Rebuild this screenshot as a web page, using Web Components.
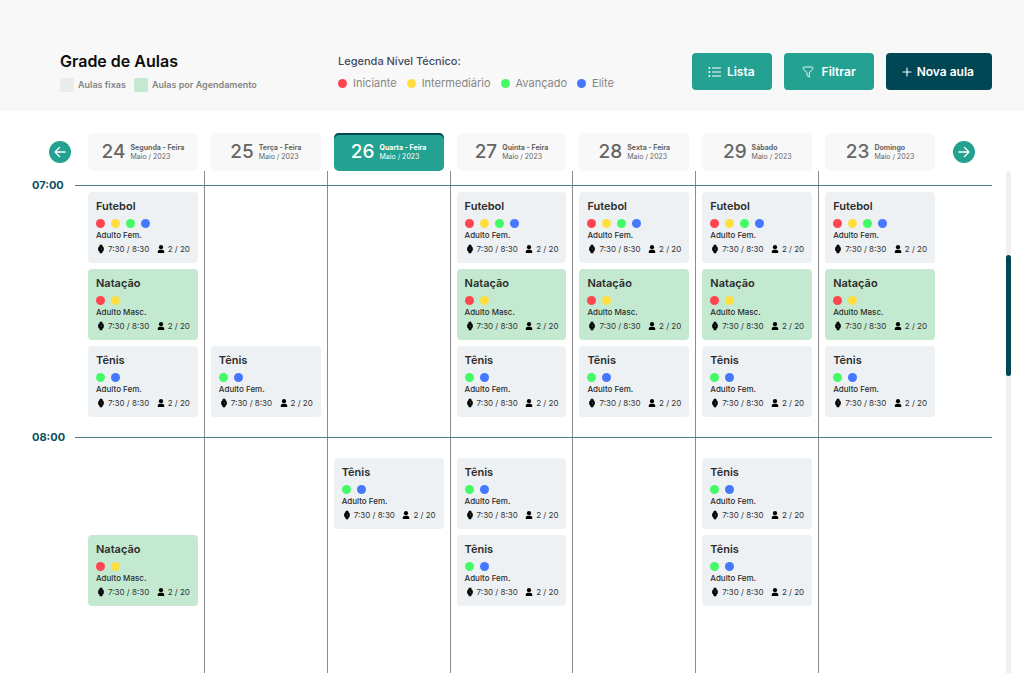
<!DOCTYPE html>
<html lang="pt-BR">
<head>
<meta charset="utf-8">
<meta name="viewport" content="width=device-width, initial-scale=1">
<title>Grade de Aulas</title>
<style>
  :root {
    --teal: #23a191;
    --navy: #004755;
    --surface: #f8f8f8;
    --fixed: #edf1f3;
    --booked: #c3e9d0;
    --red: #ff4550;
    --yellow: #ffdf3f;
    --green: #43fb67;
    --blue: #4577ff;
  }
  body {
    margin: 0;
    background: #fff;
    font-family: Inter, "Liberation Sans", sans-serif;
  }
</style>
</head>
<body>
<schedule-app></schedule-app>

<script>
const define = (name, cls) => customElements.define(name, cls);
const attach = (el, html) => { el.attachShadow({ mode: "open" }).innerHTML = html; };

const ICONS = {
  list: '<svg viewBox="0 0 14 12" width="14" height="12"><g fill="none" stroke="currentColor" stroke-width="1"><path d="M4 2h9M4 6h9M4 10h9"/></g><g fill="currentColor"><circle cx="1.4" cy="2" r="1"/><circle cx="1.4" cy="6" r="1"/><circle cx="1.4" cy="10" r="1"/></g></svg>',
  filter: '<svg viewBox="0 0 12 12" width="12" height="12"><path d="M2 1h8q.8 0 .8.800v.8q0 .5-.5 1L7.300 6.500v4.600L5 9.600V6.500L1.700 3.600q-.5-.5-.5-1v-.8Q1.200 1 2 1z" fill="none" stroke="currentColor" stroke-width=".9" stroke-linejoin="round"/></svg>',
  plus: '<svg viewBox="0 0 10 10" width="10" height="10"><path d="M5 1v8M1 5h8" stroke="currentColor" stroke-width="1.1" stroke-linecap="round"/></svg>',
  left: '<svg viewBox="0 0 12 12" width="12" height="12"><path d="M11 6H1.2M5.5 1.5L1 6l4.500 4.500" fill="none" stroke="currentColor" stroke-width="1.3" stroke-linecap="round" stroke-linejoin="round"/></svg>',
  right: '<svg viewBox="0 0 12 12" width="12" height="12"><path d="M1 6h9.800M6.500 1.500L11 6l-4.500 4.500" fill="none" stroke="currentColor" stroke-width="1.3" stroke-linecap="round" stroke-linejoin="round"/></svg>',
  watch: '<svg viewBox="0 0 8 10" width="8" height="10"><path d="M2.800 .8h2.400l.4 2H2.400zM2.800 9.200h2.400l.4-2H2.400z" fill="#000"/><circle cx="4" cy="5" r="2.900" fill="#000"/><path d="M4 3.600V5.200l1 .5" fill="none" stroke="#888" stroke-width=".5"/></svg>',
  person: '<svg viewBox="0 0 8 10" width="8" height="10"><circle cx="4" cy="3.200" r="2.100" fill="#000"/><path d="M.8 9V7.500C.8 6.200 2.400 5.800 4 5.800s3.200 .4 3.200 1.700V9z" fill="#000"/></svg>'
};

define("ui-icon", class extends HTMLElement {
  connectedCallback() {
    attach(this, `<style>:host{display:inline-flex;flex:none}svg{display:block}</style>${ICONS[this.getAttribute("name")]}`);
  }
});

define("level-dot", class extends HTMLElement {
  connectedCallback() {
    attach(this, `<style>
      :host{display:block;flex:none;width:9px;height:9px;border-radius:50%;background:var(--${this.getAttribute("color")})}
    </style>`);
  }
});

define("action-button", class extends HTMLElement {
  connectedCallback() {
    attach(this, `<style>
      :host{display:block}
      button{display:flex;align-items:center;gap:5px;height:37px;padding:0 17px 0 16px;border:0;border-radius:4px;
        background:var(--teal);color:#fff;font:600 12px/16px Inter,"Liberation Sans",sans-serif;cursor:pointer;white-space:nowrap}
      :host([tone=navy]) button{background:var(--navy);padding:0 18px 0 16px}
      :host([wide]) button{padding:0 18px;gap:8px}
    </style>
    <button type="button"><ui-icon name="${this.getAttribute("icon")}"></ui-icon><slot></slot></button>`);
  }
});

define("nav-arrow", class extends HTMLElement {
  connectedCallback() {
    const to = this.getAttribute("to");
    attach(this, `<style>
      :host{display:block;flex:none}
      button{display:grid;place-items:center;width:22px;height:22px;padding:0;border:0;border-radius:50%;
        background:var(--teal);color:#fff;cursor:pointer}
    </style>
    <button type="button" aria-label="${to === "left" ? "Semana anterior" : "Próxima semana"}"><ui-icon name="${to}"></ui-icon></button>`);
  }
});

define("page-header", class extends HTMLElement {
  connectedCallback() {
    attach(this, `<style>
      :host{display:block;background:var(--surface)}
      header{display:grid;grid-template-columns:278px 1fr auto;padding:51px 32px 18px 60px}
      h1{margin:0;font-size:16px;line-height:20px;font-weight:600;color:#0b0b0b}
      h2{margin:0;font-size:11px;line-height:20px;font-weight:500;color:#454a5c}
      ul{display:flex;list-style:none;margin:0;padding:0;color:#858585;white-space:nowrap}
      li{display:flex;align-items:center}
      .kinds{gap:8px;margin-top:6px;font-size:9px;line-height:16px;font-weight:600}
      .kinds li{gap:4px}
      .kinds i{width:14px;height:14px;border-radius:2px;background:#ebebeb}
      .kinds i.booked{background:var(--booked)}
      .levels{gap:10px;margin-top:3px;font-size:11px;line-height:18px}
      .levels li{gap:6px}
      .actions{display:flex;align-items:start;gap:12px;padding-top:2px}
    </style>
    <header>
      <div>
        <h1>Grade de Aulas</h1>
        <ul class="kinds"><li><i></i>Aulas fixas</li><li><i class="booked"></i>Aulas por Agendamento</li></ul>
      </div>
      <div>
        <h2>Legenda Nível Técnico:</h2>
        <ul class="levels">
          <li><level-dot color="red"></level-dot>Iniciante</li>
          <li><level-dot color="yellow"></level-dot>Intermediário</li>
          <li><level-dot color="green"></level-dot>Avançado</li>
          <li><level-dot color="blue"></level-dot>Elite</li>
        </ul>
      </div>
      <div class="actions">
        <action-button icon="list">Lista</action-button>
        <action-button icon="filter" wide>Filtrar</action-button>
        <action-button icon="plus" tone="navy">Nova aula</action-button>
      </div>
    </header>`);
  }
});

define("day-tab", class extends HTMLElement {
  connectedCallback() {
    attach(this, `<style>
      :host{display:block;padding:0 7px 0 6px}
      button{display:flex;align-items:center;justify-content:center;gap:5px;width:100%;height:38px;padding:0;border:0;
        border-radius:5px;background:var(--surface);color:#666;font-family:inherit;text-align:left;white-space:nowrap;cursor:pointer}
      :host([selected]) button{background:var(--teal);color:#fff;box-shadow:inset 0 2px var(--navy)}
      .num{font-size:19px;line-height:24px;font-weight:500}
      .name,.month{display:block;font-size:7px;line-height:9px;font-weight:700}
      .month{font-weight:400}
    </style>
    <button type="button" aria-pressed="${this.hasAttribute("selected")}">
      <span class="num">${this.getAttribute("day")}</span>
      <span><span class="name"><slot></slot></span><span class="month">Maio / 2023</span></span>
    </button>`);
  }
});

define("week-bar", class extends HTMLElement {
  connectedCallback() {
    attach(this, `<style>
      :host{display:flex;align-items:center;gap:11px;padding:22px 49px 0}
      .days{flex:1;display:grid;grid-template-columns:repeat(7,minmax(0,1fr))}
    </style>
    <nav-arrow to="left"></nav-arrow>
    <div class="days"><slot></slot></div>
    <nav-arrow to="right"></nav-arrow>`);
  }
});

const CLASSES = {
  futebol: { title: "Futebol", group: "Adulto Fem.", levels: ["red", "yellow", "green", "blue"] },
  natacao: { title: "Natação", group: "Adulto Masc.", levels: ["red", "yellow"], booked: true },
  tenis: { title: "Tênis", group: "Adulto Fem.", levels: ["green", "blue"] }
};

define("class-card", class extends HTMLElement {
  connectedCallback() {
    const c = CLASSES[this.getAttribute("kind")];
    attach(this, `<style>
      :host{display:block;min-width:0}
      article{box-sizing:border-box;height:100%;padding:6px 8px;border-radius:4px;white-space:nowrap;
        background:var(--${c.booked ? "booked" : "fixed"});color:#2c2c2c}
      h3{margin:0;font-size:11px;line-height:16px;font-weight:600}
      .levels{display:flex;gap:6px;margin-top:5px}
      p{margin:0;font-size:8px;line-height:14px;font-weight:500}
      .meta{display:flex;justify-content:space-between;padding-left:1px;font-size:8px;line-height:14px;color:#333}
      .meta span{display:flex;align-items:center;gap:3px}
    </style>
    <article>
      <h3>${c.title}</h3>
      <div class="levels">${c.levels.map(l => `<level-dot color="${l}"></level-dot>`).join("")}</div>
      <p>${c.group}</p>
      <div class="meta"><span><ui-icon name="watch"></ui-icon>7:30 / 8:30</span><span><ui-icon name="person"></ui-icon>2 / 20</span></div>
    </article>`);
  }
});

define("day-lane", class extends HTMLElement {
  connectedCallback() {
    attach(this, `<style>
      :host{display:grid;grid-auto-rows:71px;gap:6px;padding:var(--lane-top,0) 6px 20px;border-right:1px solid #8c8c8c}
      :host(:last-child){border-color:transparent}
    </style><slot></slot>`);
  }
});

define("hour-block", class extends HTMLElement {
  connectedCallback() {
    attach(this, `<style>
      :host{display:grid;grid-template-columns:43px minmax(0,1fr)}
      time{margin-top:-9px;font-size:11px;line-height:18px;font-weight:700;color:#0c4f5e}
      .lanes{display:grid;grid-template-columns:repeat(7,minmax(0,1fr));padding:0 50px 0 7px;border-top:1px solid #4f7f8d}
    </style>
    <time>${this.getAttribute("hour")}</time>
    <div class="lanes"><slot></slot></div>`);
  }
});

define("scroll-rail", class extends HTMLElement {
  connectedCallback() {
    attach(this, `<style>
      :host{display:flex;flex-direction:column;width:5px;border-radius:3px 3px 0 0;background:#efefef}
      .lead{flex:84}
      .thumb{flex:121;border-radius:3px;background:var(--navy)}
      .tail{flex:297}
    </style><div class="lead"></div><div class="thumb"></div><div class="tail"></div>`);
  }
});

const DAYS = [
  ["24", "Segunda - Feira"], ["25", "Terça - Feira"], ["26", "Quarta - Feira"], ["27", "Quinta - Feira"],
  ["28", "Sexta - Feira"], ["29", "Sábado"], ["23", "Domingo"]
];
const FULL = [["futebol", 1], ["natacao", 2], ["tenis", 3]];
const HOURS = [
  { hour: "07:00", lanes: [FULL, [["tenis", 3]], [], FULL, FULL, FULL, FULL] },
  { hour: "08:00", lanes: [[["natacao", 2]], [], [["tenis", 1]], [["tenis", 1], ["tenis", 2]], [], [["tenis", 1], ["tenis", 2]], []] }
];

define("schedule-app", class extends HTMLElement {
  connectedCallback() {
    const lane = cards => `<day-lane>${cards.map(([kind, row]) => `<class-card kind="${kind}" style="grid-row:${row}"></class-card>`).join("")}</day-lane>`;
    attach(this, `<style>
      :host{display:flex;flex-direction:column;min-height:100vh}
      main{flex:1;display:flex;flex-direction:column}
      .board{flex:1;display:grid;grid-template-columns:minmax(0,1fr) 5px;gap:14px;padding:0 13px 0 32px}
      .hours{display:flex;flex-direction:column}
      .lead{display:grid;grid-template-columns:repeat(7,minmax(0,1fr));height:14px;padding:0 50px}
      .lead day-lane{padding:0}
      hour-block{--lane-top:6px}
      hour-block:last-child{--lane-top:20px;flex:1}
    </style>
    <page-header></page-header>
    <main>
      <week-bar>${DAYS.map(([d, n]) => `<day-tab day="${d}"${d === "26" ? " selected" : ""}>${n}</day-tab>`).join("")}</week-bar>
      <div class="board">
        <div class="hours">
          <div class="lead">${DAYS.map(() => "<day-lane></day-lane>").join("")}</div>
          ${HOURS.map(h => `<hour-block hour="${h.hour}">${h.lanes.map(lane).join("")}</hour-block>`).join("")}
        </div>
        <scroll-rail></scroll-rail>
      </div>
    </main>`);
  }
});
</script>
</body>
</html>
